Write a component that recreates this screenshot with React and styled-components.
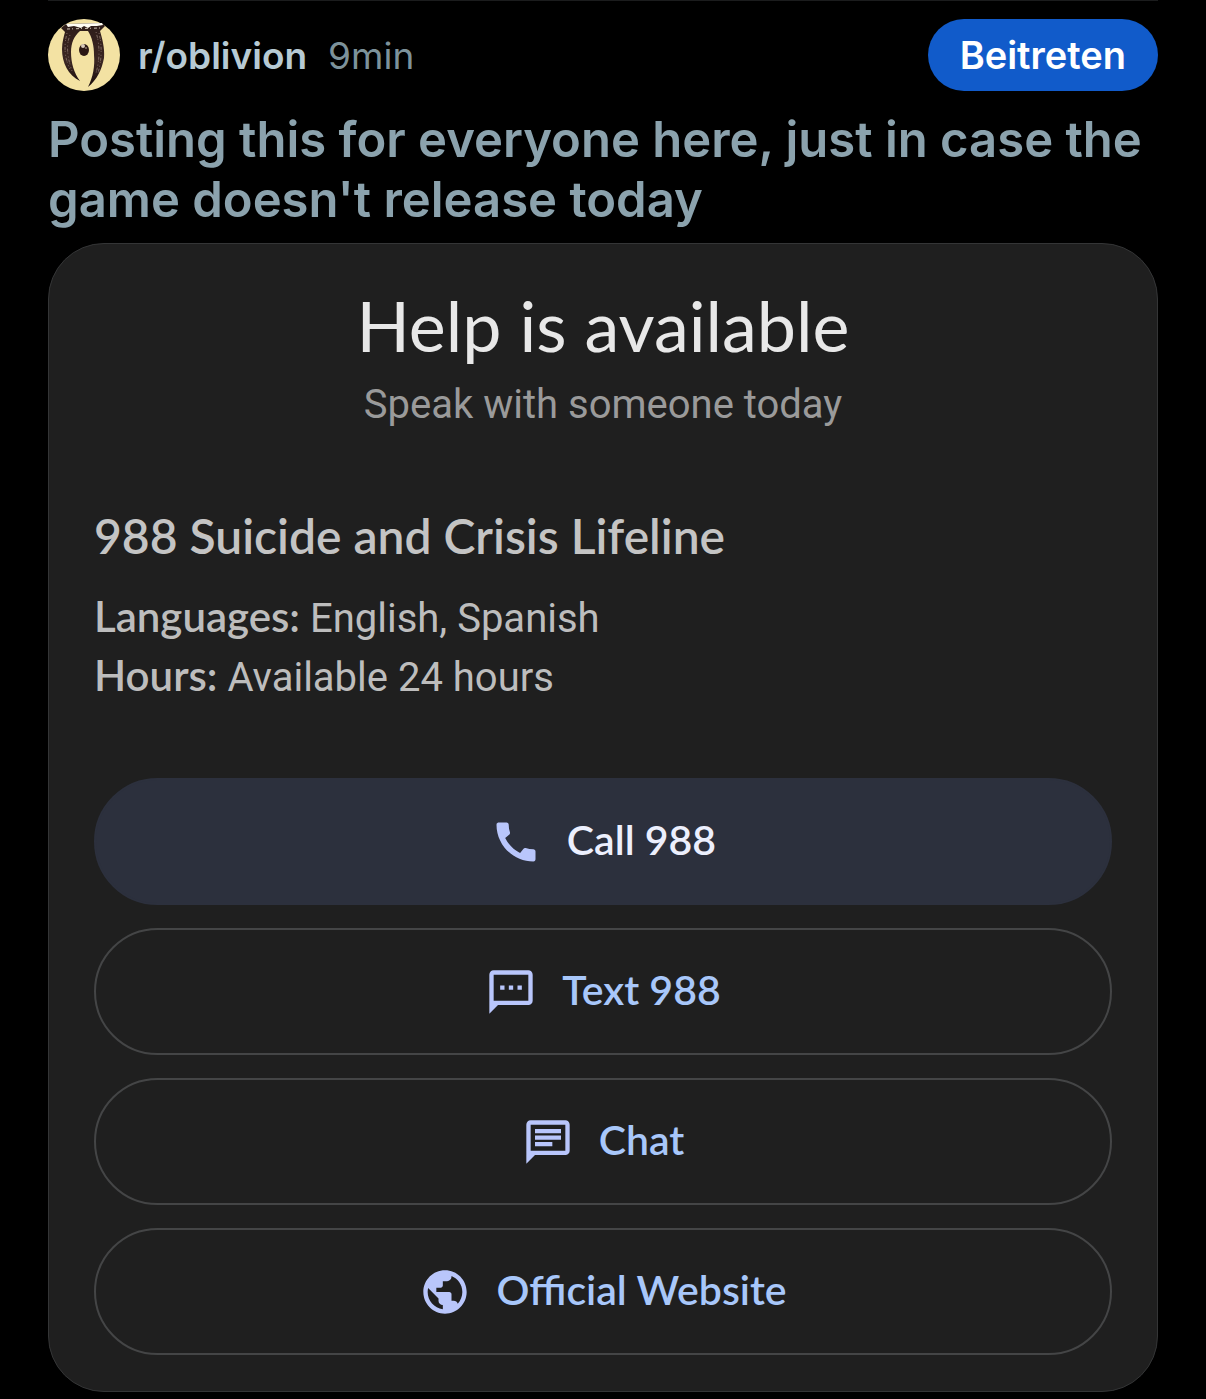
import styled, { createGlobalStyle } from "styled-components"
import { MdCall, MdPublic } from "react-icons/md"

const BUBBLE = "M4 2h16a2 2 0 0 1 2 2v12a2 2 0 0 1-2 2H6l-4 4V4a2 2 0 0 1 2-2zM4 4v12h16V4z"

export default function App() {
    return (
        <>
            <GlobalStyle />
            <Post>
                <PostHeader>
                    <Community href="#oblivion">
                        <Avatar />
                        <span>r/oblivion</span>
                    </Community>
                    <Time>9min</Time>
                    <JoinButton type="button">Beitreten</JoinButton>
                </PostHeader>
                <Title>Posting this for everyone here, just in case the game doesn't release today</Title>
                <HelpCard />
            </Post>
        </>
    )
}

function HelpCard() {
    return (
        <Card>
            <Heading>Help is available</Heading>
            <Subheading>Speak with someone today</Subheading>
            <Lifeline>988 Suicide and Crisis Lifeline</Lifeline>
            <Detail><b>Languages:</b> English, Spanish</Detail>
            <Detail><b>Hours:</b> Available 24 hours</Detail>
            <Actions>
                <Action type="button" $filled>
                    <MdCall />
                    <Label>Call 988</Label>
                </Action>
                <Action type="button">
                    <SmsIcon />
                    <Label>Text 988</Label>
                </Action>
                <Action type="button">
                    <ChatIcon />
                    <Label>Chat</Label>
                </Action>
                <Action as="a" href="#website">
                    <MdPublic />
                    <Label>Official Website</Label>
                </Action>
            </Actions>
        </Card>
    )
}

function SmsIcon() {
    return (
        <svg viewBox="0 0 24 24" fill="currentColor" aria-hidden="true">
            <path fillRule="evenodd" d={BUBBLE} />
            <path d="M7 9h2v2H7zM11 9h2v2h-2zM15 9h2v2h-2z" />
        </svg>
    )
}

function ChatIcon() {
    return (
        <svg viewBox="0 0 24 24" fill="currentColor" aria-hidden="true">
            <path fillRule="evenodd" d={BUBBLE} />
            <path d="M6 6h12v2H6zM6 9h12v2H6zM6 12h8v2H6z" />
        </svg>
    )
}

function Avatar() {
    return (
        <AvatarSvg viewBox="0 0 72 72" aria-hidden="true">
            <defs>
                <linearGradient id="stone" x1="0" y1="0" x2="0" y2="1">
                    <stop offset="0" stopColor="#2e1d19" />
                    <stop offset="0.3" stopColor="#35211d" />
                    <stop offset="0.6" stopColor="#3b2723" />
                    <stop offset="1" stopColor="#1a0d0b" />
                </linearGradient>
            </defs>
            <circle cx="36" cy="36" r="36" fill="#f3e2a3" />
            <path
                fill="url(#stone)"
                d="M13 9 L18 5 L54 4 L57 7 L52 12 C54 19 57 29 56 39 C54 50 49 61 40 68 C45 58 47 47 46 36 C46 27 44 18 40 12 L32 12 C26 17 23 24 23 33 C23 44 26 54 32 62 C20 56 14 44 14 30 C14 23 16 17 17 13 Z"
            />
            <path
                fill="none"
                stroke="#7d6860"
                strokeWidth="1"
                strokeDasharray="1 2 3 1 1 3"
                d="M19 14 C16 26 16 38 22 50M22 16 C18 26 19 37 24 52M48 13 C52 26 52 40 48 54M51 14 C54 26 54 40 50 54"
            />
            <path fill="#fffdf4" d="M18 5 L54 4 L55 6 L49 7 L43 7 L40 9 L36 7 L33 9 L26 7 L20 8 Z" />
            <path stroke="#cfc2b4" strokeWidth="1" strokeDasharray="3 2 1 3" d="M19 10 L52 9" />
            <ellipse cx="36" cy="31" rx="5" ry="6" fill="#2a1714" />
            <circle cx="35" cy="27" r="2" fill="#d8cabb" />
            <circle cx="38" cy="29" r="1" fill="#8d7a70" />
        </AvatarSvg>
    )
}

const GlobalStyle = createGlobalStyle`
    body {
        margin: 0;
        background-color: #000000;
    }

    * {
        box-sizing: border-box;
    }
`
const Post = styled.article`
    margin: 0 48px 7px;
    border-top: 1px solid #1b1c1d;

    font-family: Inter, sans-serif;
`
const PostHeader = styled.header`
    display: flex;
    align-items: center;

    padding-top: 18px;
`
const Community = styled.a`
    display: flex;
    align-items: center;
    gap: 18px;

    color: #b7cad4;
    font-size: 37px;
    font-weight: 600;
    text-decoration: none;
`
const AvatarSvg = styled.svg`
    width: 72px;
    height: 72px;
`
const Time = styled.span`
    margin-left: 21px;

    color: #7d929b;
    font-size: 37px;
`
const JoinButton = styled.button`
    height: 72px;
    margin-left: auto;
    padding: 0 32px;

    border: none;
    border-radius: 36px;

    background-color: #115bca;
    color: #ffffff;

    font-family: inherit;
    font-size: 38px;
    font-weight: 600;
`
const Title = styled.h1`
    margin: 19px 0 13px;

    color: #8ba2ad;
    font-size: 49px;
    font-weight: 600;
    line-height: 60px;
`
const Card = styled.section`
    padding: 45px 45px 36px;

    border: 1px solid #343536;
    border-radius: 56px;

    background-color: #1f1f1f;

    font-family: Roboto, sans-serif;
`
const Heading = styled.h2`
    margin: 0;

    color: #e8e8e8;
    font-family: Lato, sans-serif;
    font-size: 70px;
    font-weight: 400;
    line-height: 72px;
    text-align: center;
`
const Subheading = styled.p`
    margin: 20px 0 0;

    color: #9a9a9a;
    font-size: 40px;
    line-height: 48px;
    text-align: center;
`
const Lifeline = styled.h3`
    margin: 77px 0 23px;

    color: #c4c4c4;
    font-family: Lato, sans-serif;
    font-size: 48px;
    font-weight: 600;
    line-height: 60px;
`
const Detail = styled.p`
    margin: 0;

    color: #bdbdbd;
    font-size: 40px;
    line-height: 59px;

    b {
        font-family: Lato, sans-serif;
        font-size: 42px;
        font-weight: 600;
        line-height: 1;
    }
`
const Actions = styled.div`
    display: flex;
    flex-direction: column;
    gap: 23px;

    margin-top: 71px;
`
const Action = styled.button`
    display: flex;
    align-items: center;
    justify-content: center;
    gap: 25px;

    width: 100%;
    height: 127px;

    border: 2px solid ${props => (props.$filled ? "#2c303d" : "#444546")};
    border-radius: 64px;

    background-color: ${props => (props.$filled ? "#2c303d" : "transparent")};
    color: ${props => (props.$filled ? "#eceffd" : "#a8c7fa")};

    font-family: Lato, sans-serif;
    font-size: 41px;
    font-weight: 600;
    text-decoration: none;

    svg {
        width: 52px;
        height: 52px;

        color: #b9c6fb;
    }
`
const Label = styled.span`
    padding-bottom: 4px;
`
